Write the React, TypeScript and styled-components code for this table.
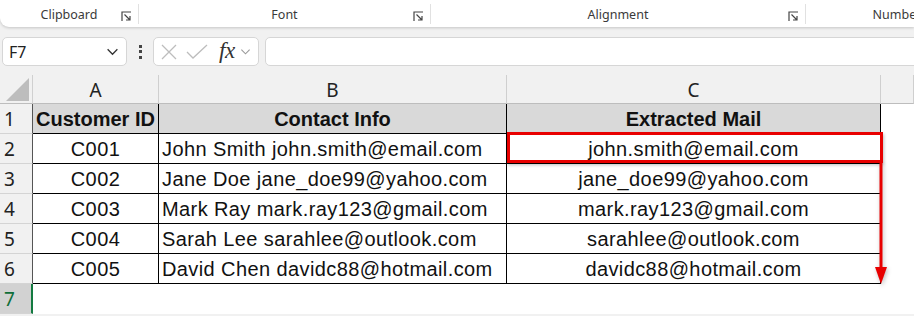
import React from "react";
import styled, {createGlobalStyle} from "styled-components";

const GlobalStyle = createGlobalStyle`
    html, body {
        margin: 0;
        padding: 0;
        background: #f1f1f1;
        overflow: hidden;
    }
    * {
        box-sizing: border-box;
    }
`

type Row = {
    id: string
    contact: string
    mail: string
}

const rows: Row[] = [
    {id: "C001", contact: "John Smith john.smith@email.com", mail: "john.smith@email.com"},
    {id: "C002", contact: "Jane Doe jane_doe99@yahoo.com", mail: "jane_doe99@yahoo.com"},
    {id: "C003", contact: "Mark Ray mark.ray123@gmail.com", mail: "mark.ray123@gmail.com"},
    {id: "C004", contact: "Sarah Lee sarahlee@outlook.com", mail: "sarahlee@outlook.com"},
    {id: "C005", contact: "David Chen davidc88@hotmail.com", mail: "davidc88@hotmail.com"},
]

const groups = [
    {label: "Clipboard", width: 139, launcher: true},
    {label: "Font", width: 292, launcher: true},
    {label: "Alignment", width: 375, launcher: true},
    {label: "Number", width: 182, launcher: false},
]

const Launcher = () => (
    <LauncherIcon width="11" height="11" viewBox="0 0 11 11">
        <path d="M1 10V1h9" fill="none" stroke="#444" strokeWidth="1.2"/>
        <path d="M3.5 3.5L9 9M9 5v4H5" fill="none" stroke="#444" strokeWidth="1.2"/>
    </LauncherIcon>
)

const Chevron = ({size = 12, color = "#444"}: { size?: number, color?: string }) => (
    <svg width={size} height={size} viewBox="0 0 12 12">
        <path d="M1.5 4l4.5 4.5L10.5 4" fill="none" stroke={color} strokeWidth="1.2"/>
    </svg>
)

export default function App() {
    return (
        <>
            <GlobalStyle/>
            <Page>
                <Ribbon>
                    {groups.map(g => (
                        <Group key={g.label} $width={g.width} $last={!g.launcher}>
                            <GroupLabel>{g.label}</GroupLabel>
                            {g.launcher && <Launcher/>}
                        </Group>
                    ))}
                </Ribbon>

                <FormulaBar>
                    <NameBox>
                        <span>F7</span>
                        <Chevron size={13} color="#333"/>
                    </NameBox>
                    <Kebab>
                        <i/><i/><i/>
                    </Kebab>
                    <FxButtons>
                        <svg width="18" height="18" viewBox="0 0 18 18">
                            <path d="M2 2l14 14M16 2L2 16" stroke="#bdbdbd" strokeWidth="1.3"/>
                        </svg>
                        <svg width="22" height="18" viewBox="0 0 22 18">
                            <path d="M1 9l6 6L21 2" fill="none" stroke="#bdbdbd" strokeWidth="1.3"/>
                        </svg>
                        <Fx>fx</Fx>
                        <Chevron size={11} color="#9a9a9a"/>
                    </FxButtons>
                    <FormulaInput/>
                </FormulaBar>

                <Sheet>
                    <Corner>
                        <svg width="23" height="23" viewBox="0 0 23 23">
                            <path d="M23 0V23H0Z" fill="#bdbdbd"/>
                        </svg>
                    </Corner>
                    <ColHead>A</ColHead>
                    <ColHead>B</ColHead>
                    <ColHead>C</ColHead>
                    <ColHead/>

                    <RowHead>1</RowHead>
                    <Cell $head $bold $center>Customer ID</Cell>
                    <Cell $head $bold $center>Contact Info</Cell>
                    <Cell $head $bold $center>Extracted Mail</Cell>
                    <Blank/>

                    {rows.map((r, i) => (
                        <React.Fragment key={r.id}>
                            <RowHead>{i + 2}</RowHead>
                            <Cell $center>{r.id}</Cell>
                            <Cell>{r.contact}</Cell>
                            <Cell $center>{r.mail}</Cell>
                            <Blank/>
                        </React.Fragment>
                    ))}

                    <RowHead $active>7</RowHead>
                    <Blank/>
                    <Blank/>
                    <Blank/>
                    <Blank/>

                    <Highlight/>
                    <Arrow width="14" height="124" viewBox="0 0 14 124">
                        <path d="M7 0V108" stroke="#e80000" strokeWidth="3"/>
                        <path d="M1 105H13L7 122Z" fill="#e80000"/>
                    </Arrow>
                </Sheet>
            </Page>
        </>
    )
}

const Page = styled.div`
    width: 914px;
    height: 316px;
    font-family: "Noto Sans", "Open Sans", sans-serif;
    overflow: hidden;
`
const Ribbon = styled.div`
    display: flex;
    height: 27px;
    background: #fff;
    border-radius: 0 0 0 9px;
    box-shadow: 0 1px 3px rgba(0, 0, 0, 0.18);
    overflow: hidden;
`
const Group = styled.div<{ $width: number, $last: boolean }>`
    position: relative;
    width: ${p => p.$width}px;
    flex: none;
    display: flex;
    align-items: center;
    justify-content: center;
    padding-top: 2px;
    border-right: ${p => p.$last ? "none" : "1px solid #e1e1e1"};
    height: 20px;
    align-self: flex-start;
    margin-top: 4px;
`
const GroupLabel = styled.span`
    font-size: 12.5px;
    color: #3a3a3a;
    margin-top: -2px;
    white-space: nowrap;
`
const LauncherIcon = styled.svg`
    position: absolute;
    right: 6px;
    top: 7px;
`
const FormulaBar = styled.div`
    display: flex;
    align-items: center;
    height: 29px;
    margin-top: 10px;
    padding-left: 2px;
`
const Box = styled.div`
    height: 29px;
    background: #fff;
    border: 1px solid #d6d6d6;
    border-radius: 5px;
`
const NameBox = styled(Box)`
    width: 125px;
    display: flex;
    align-items: center;
    justify-content: space-between;
    padding: 0 7px 0 6px;
    font-size: 16px;
    color: #222;
`
const Kebab = styled.div`
    width: 26px;
    display: flex;
    flex-direction: column;
    align-items: center;
    gap: 2.5px;

    i {
        width: 3px;
        height: 3px;
        background: #444;
    }
`
const FxButtons = styled(Box)`
    width: 106px;
    display: flex;
    align-items: center;
    padding: 0 0 0 6px;
    gap: 8px;
`
const Fx = styled.span`
    font-family: "Liberation Serif", "DejaVu Serif", serif;
    font-style: italic;
    font-size: 23px;
    line-height: 1;
    color: #333;
    margin-left: 3px;
    margin-right: -3px;
    margin-top: -3px;
    letter-spacing: -0.5px;
`
const FormulaInput = styled(Box)`
    flex: 1;
    margin-left: 6px;
    margin-right: -10px;
`
const Sheet = styled.div`
    position: relative;
    margin-top: 9px;
    display: grid;
    grid-template-columns: 33px 126px 348px 374px 1fr;
    grid-template-rows: 29px repeat(7, 30px);
`
const Corner = styled.div`
    display: flex;
    align-items: flex-end;
    justify-content: flex-end;
    padding: 0 3px 2px 0;
    border-right: 1px solid #d0d0d0;
    border-bottom: 1px solid #bdbdbd;
`
const ColHead = styled.div`
    display: flex;
    align-items: center;
    justify-content: center;
    padding-top: 2px;
    font-size: 19px;
    color: #222;
    border-right: 1px solid #cfcfcf;
    border-bottom: 1px solid #bdbdbd;

    &:last-of-type {
        border-right: none;
    }
`
const RowHead = styled.div<{ $active?: boolean }>`
    display: flex;
    align-items: center;
    padding-left: 4px;
    font-size: 19px;
    color: ${p => p.$active ? "#0f6e39" : "#222"};
    background: ${p => p.$active ? "#d2d2d2" : "#f1f1f1"};
    border-bottom: 1px solid #d4d4d4;
    border-right: ${p => p.$active ? "2px solid #137a40" : "1px solid #555"};
`
const Cell = styled.div<{ $head?: boolean, $bold?: boolean, $center?: boolean }>`
    display: flex;
    align-items: center;
    justify-content: ${p => p.$center ? "center" : "flex-start"};
    padding: 1px 3px 0;
    font-family: "Liberation Sans", Arial, sans-serif;
    font-size: 20px;
    font-weight: ${p => p.$bold ? 700 : 400};
    letter-spacing: ${p => p.$bold ? "0" : "0.4px"};
    color: #111;
    background: ${p => p.$head ? "#d9d9d9" : "#fff"};
    border-right: 1px solid #000;
    border-bottom: 1px solid #000;
    white-space: nowrap;
    overflow: hidden;
`
const Blank = styled.div`
    background: #fff;
`
const Highlight = styled.div`
    position: absolute;
    left: 507px;
    top: 57px;
    width: 376px;
    height: 31px;
    border: 3px solid #e80000;
    box-shadow: 1px 2px 3px rgba(0, 0, 0, 0.25);
    pointer-events: none;
`
const Arrow = styled.svg`
    position: absolute;
    left: 874px;
    top: 87px;
    filter: drop-shadow(1px 2px 2px rgba(0, 0, 0, 0.25));
`
